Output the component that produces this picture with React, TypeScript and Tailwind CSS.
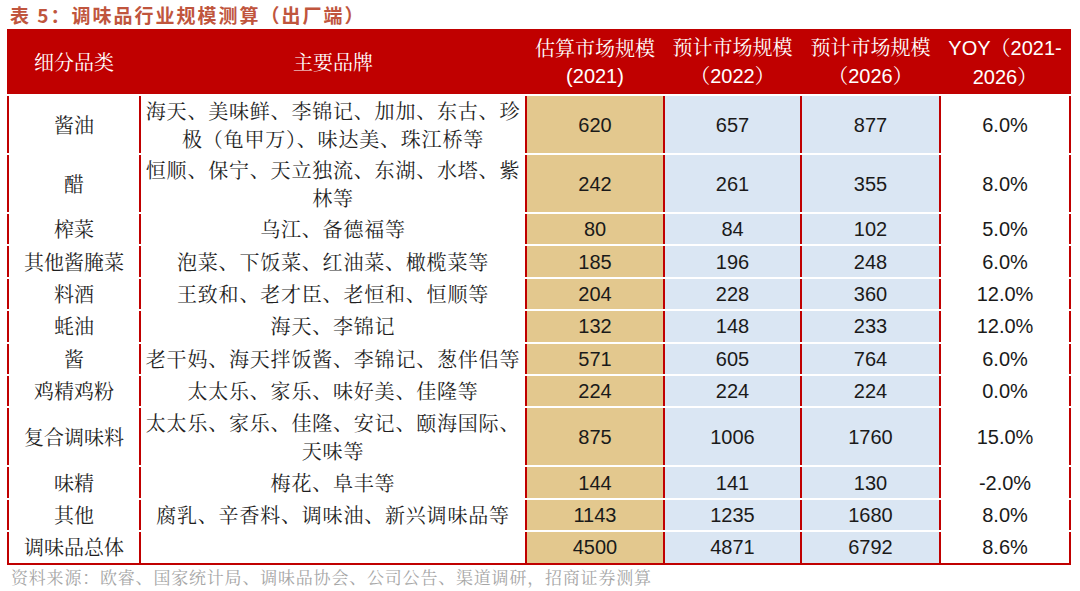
import React from 'react'

type Row = {
  cat: string
  brands: string[]
  v21: string
  v22: string
  v26: string
  yoy: string
  tall?: boolean
}

const rows: Row[] = [
  { cat: '酱油', brands: ['海天、美味鲜、李锦记、加加、东古、珍', '极（龟甲万）、味达美、珠江桥等'], v21: '620', v22: '657', v26: '877', yoy: '6.0%', tall: true },
  { cat: '醋', brands: ['恒顺、保宁、天立独流、东湖、水塔、紫', '林等'], v21: '242', v22: '261', v26: '355', yoy: '8.0%', tall: true },
  { cat: '榨菜', brands: ['乌江、备德福等'], v21: '80', v22: '84', v26: '102', yoy: '5.0%' },
  { cat: '其他酱腌菜', brands: ['泡菜、下饭菜、红油菜、橄榄菜等'], v21: '185', v22: '196', v26: '248', yoy: '6.0%' },
  { cat: '料酒', brands: ['王致和、老才臣、老恒和、恒顺等'], v21: '204', v22: '228', v26: '360', yoy: '12.0%' },
  { cat: '蚝油', brands: ['海天、李锦记'], v21: '132', v22: '148', v26: '233', yoy: '12.0%' },
  { cat: '酱', brands: ['老干妈、海天拌饭酱、李锦记、葱伴侣等'], v21: '571', v22: '605', v26: '764', yoy: '6.0%' },
  { cat: '鸡精鸡粉', brands: ['太太乐、家乐、味好美、佳隆等'], v21: '224', v22: '224', v26: '224', yoy: '0.0%' },
  { cat: '复合调味料', brands: ['太太乐、家乐、佳隆、安记、颐海国际、', '天味等'], v21: '875', v22: '1006', v26: '1760', yoy: '15.0%', tall: true },
  { cat: '味精', brands: ['梅花、阜丰等'], v21: '144', v22: '141', v26: '130', yoy: '-2.0%' },
  { cat: '其他', brands: ['腐乳、辛香料、调味油、新兴调味品等'], v21: '1143', v22: '1235', v26: '1680', yoy: '8.0%' },
  { cat: '调味品总体', brands: [''], v21: '4500', v22: '4871', v26: '6792', yoy: '8.6%' },
]

const cjk = "font-['Noto_Serif_CJK_SC','Noto_Sans_CJK_SC',serif]"
const num = "font-['Liberation_Sans',Arial,sans-serif] text-[20px] text-[#1a1a1a]"

export default function App() {
  return (
    <div className="w-[1080px] h-[591px] bg-white overflow-hidden">
      {/* title */}
      <div className="h-[29px] pl-[10px] flex items-center">
        <span className="font-['Noto_Sans_CJK_SC',sans-serif] font-bold text-[19px] tracking-[2px] text-[#c0553d] leading-none">
          表 5：调味品行业规模测算（出厂端）
        </span>
      </div>

      <div className="ml-[7px] w-[1064px]">
        {/* header */}
        <div className={`flex h-[65px] bg-[#c00000] px-[2px] gap-[2px] text-white text-[20px] leading-[28px] ${cjk}`}>
          <div className="w-[130px] flex items-center justify-center">细分品类</div>
          <div className="w-[384px] flex items-center justify-center">主要品牌</div>
          <div className="w-[136px] flex flex-col items-center justify-center">
            <span>估算市场规模</span>
            <span className="font-['Liberation_Sans',sans-serif]">(2021)</span>
          </div>
          <div className="w-[135px] flex flex-col items-center justify-center">
            <span>预计市场规模</span>
            <span>（<span className="font-['Liberation_Sans',sans-serif]">2022</span>）</span>
          </div>
          <div className="w-[137px] flex flex-col items-center justify-center">
            <span>预计市场规模</span>
            <span>（<span className="font-['Liberation_Sans',sans-serif]">2026</span>）</span>
          </div>
          <div className="w-[128px] flex flex-col items-center justify-center">
            <span><span className="font-['Liberation_Sans',sans-serif]">YOY</span>（<span className="font-['Liberation_Sans',sans-serif]">2021-</span></span>
            <span><span className="font-['Liberation_Sans',sans-serif]">2026</span>）</span>
          </div>
        </div>

        {/* body */}
        <div className="flex flex-col gap-[2px] pt-[2px] bg-white border-b-2 border-[#c00000]">
          {rows.map((r, i) => (
            <div
              key={i}
              className={`flex bg-[#c00000] px-[2px] gap-[2px] ${r.tall ? 'h-[57px]' : 'h-[30.4px]'}`}
            >
              <div className={`w-[130px] bg-white flex items-center justify-center text-[20px] text-[#1f1f1f] ${cjk}`}>
                {r.cat}
              </div>
              <div className={`w-[384px] bg-white flex flex-col items-center justify-center text-[20px] leading-[28px] tracking-[0.8px] text-[#1f1f1f] whitespace-nowrap ${cjk}`}>
                {r.brands.map((b, j) => (
                  <span key={j}>{b}</span>
                ))}
              </div>
              <div className={`w-[136px] bg-[#e3c88e] flex items-center justify-center ${num}`}>{r.v21}</div>
              <div className={`w-[135px] bg-[#dae6f3] flex items-center justify-center ${num}`}>{r.v22}</div>
              <div className={`w-[137px] bg-[#dae6f3] flex items-center justify-center ${num}`}>{r.v26}</div>
              <div className={`w-[128px] bg-white flex items-center justify-center ${num}`}>{r.yoy}</div>
            </div>
          ))}
        </div>
      </div>

      {/* source */}
      <div className={`pl-[11px] pt-[1px] text-[17px] leading-[22px] tracking-[0.8px] text-[#a6a6a6] ${cjk}`}>
        资料来源：欧睿、国家统计局、调味品协会、公司公告、渠道调研，招商证券测算
      </div>
    </div>
  )
}
